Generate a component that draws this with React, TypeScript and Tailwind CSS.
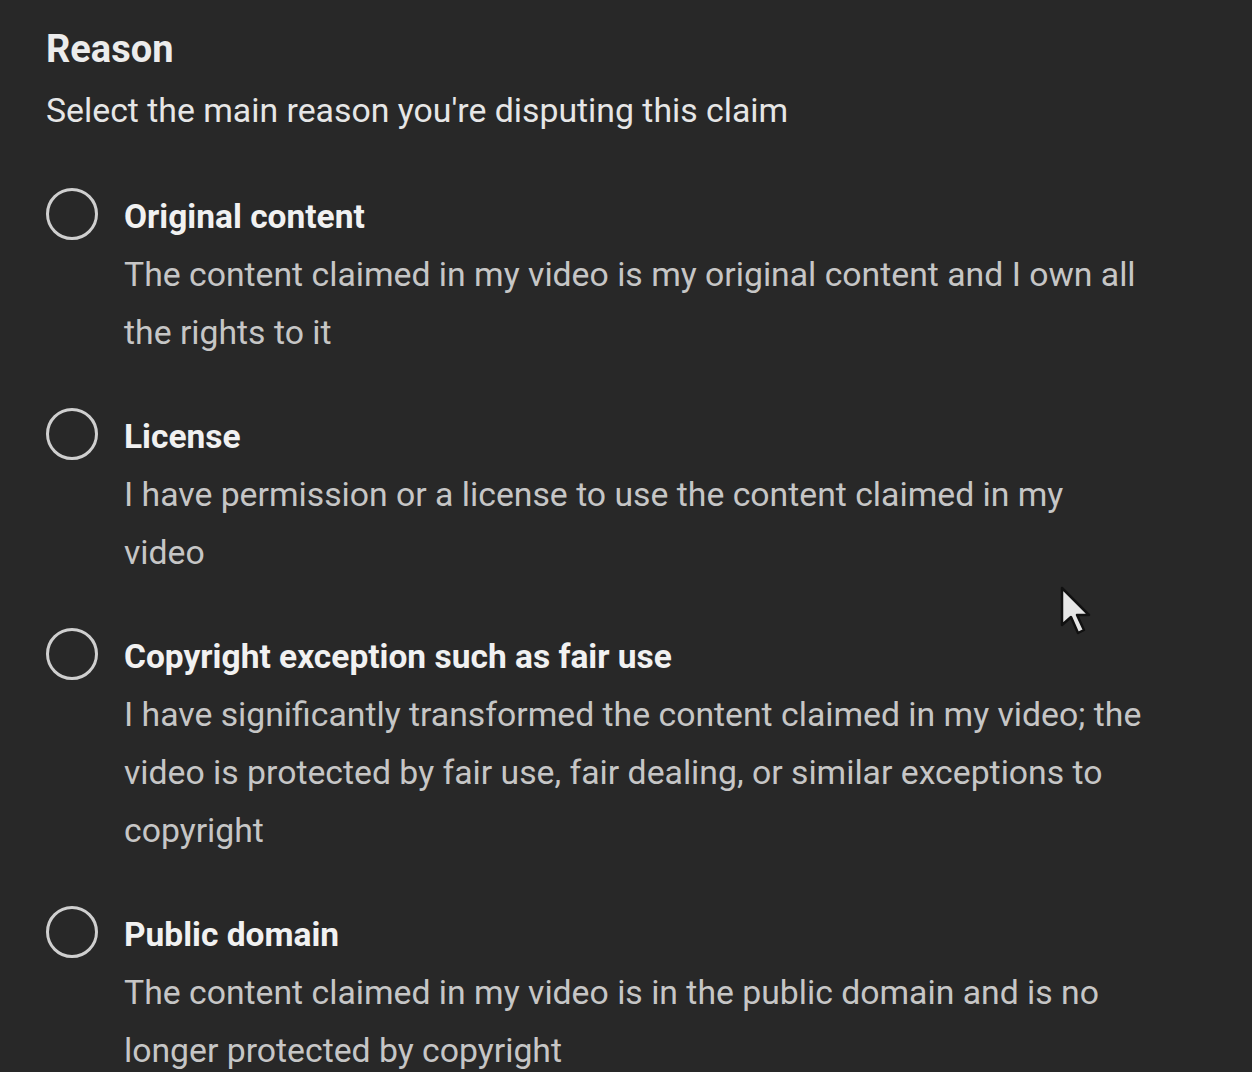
const options = [
  {
    title: "Original content",
    body: "The content claimed in my video is my original content and I own all the rights to it",
  },
  {
    title: "License",
    body: "I have permission or a license to use the content claimed in my video",
  },
  {
    title: "Copyright exception such as fair use",
    body: "I have significantly transformed the content claimed in my video; the video is protected by fair use, fair dealing, or similar exceptions to copyright",
  },
  {
    title: "Public domain",
    body: "The content claimed in my video is in the public domain and is no longer protected by copyright",
  },
];

function RadioOption({ title, body }: { title: string; body: string }) {
  return (
    <label className="flex items-start gap-[26px]">
      <span className="h-[52px] w-[52px] shrink-0 rounded-full border-[3.5px] border-[#cfcfcf]" />
      <span className="flex w-[1021px] flex-col">
        <span className="text-[33.5px] font-bold leading-[58px] text-[#f1f1f1]">{title}</span>
        <span className="text-[33.75px] leading-[58px] text-[#c6c6c6]">{body}</span>
      </span>
    </label>
  );
}

function Cursor() {
  return (
    <svg className="absolute left-[1058px] top-[585px]" width="36" height="56" viewBox="0 0 36 56">
      <path
        d="M4 3 L4 40 L13 32 L20 48 L26 45 L19 30 L31 30 Z"
        fill="#e6e6e6"
        stroke="#111"
        strokeWidth="2.5"
        strokeLinejoin="round"
      />
    </svg>
  );
}

export default function App() {
  return (
    <div className="relative min-h-screen overflow-hidden bg-[#282828] px-[46px] pt-[25px] font-['Roboto',sans-serif]">
      <h2 className="text-[38px] font-bold leading-[48px] text-[#ececec]">Reason</h2>
      <p className="mt-[9px] text-[33.8px] leading-[58px] text-[#e6e6e6]">
        Select the main reason you're disputing this claim
      </p>
      <div className="mt-[48px] flex flex-col gap-[46px]">
        {options.map((o) => (
          <RadioOption key={o.title} title={o.title} body={o.body} />
        ))}
      </div>
      <Cursor />
    </div>
  );
}
